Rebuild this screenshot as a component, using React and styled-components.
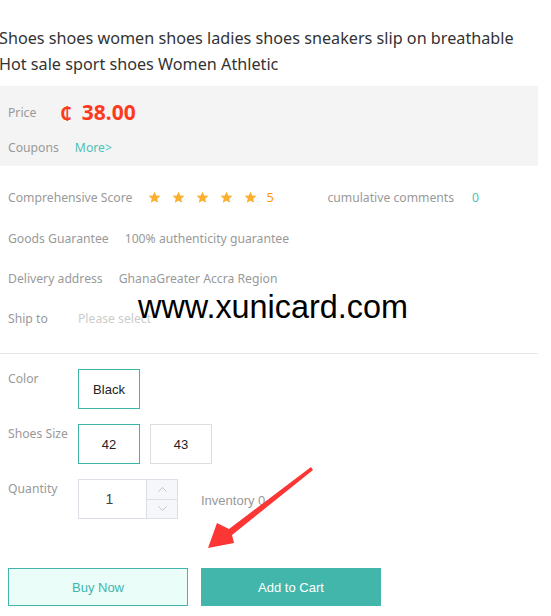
import React from 'react';
import styled, { createGlobalStyle } from 'styled-components';

const GlobalStyle = createGlobalStyle`
    body{
        margin:0;
        background:#fff;
        font-family:"Noto Sans", "Open Sans", sans-serif;
    }
`;

const Page = styled.div`
    position:relative;
    width:538px;
    padding-top:25px;
`;

const Title = styled.h1`
    margin:0 0 9px -1px;
    font-size:16.2px;
    font-weight:400;
    line-height:26px;
    color:#333;
`;

const PricePanel = styled.div`
    background:#f4f4f4;
    padding:8px 8px 4px;
`;

const Row = styled.div`
    display:flex;
    align-items:center;
    height:${props => props.h || 40}px;
    margin-top:${props => props.mt || 0}px;
    font-size:12.2px;
    color:#999;
`;

const Label = styled.span`
    flex:none;
    width:${props => props.w ? props.w + 'px' : 'auto'};
    margin-right:${props => props.w ? 0 : props.mr || 16}px;
    color:#999;
`;

const Price = styled.span`
    margin-left:8px;
    font-size:21px;
    font-weight:700;
    color:#fd3a1d;
    small{
        font-size:18px;
        margin-right:10px;
    }
`;

const TealLink = styled.span`
    color:#4fc1b7;
    margin-left:${props => props.ml || 0}px;
`;

const Info = styled.div`
    padding:10px 8px 15px;
    border-bottom:1px solid #e8e8e8;
`;

const Stars = styled.span`
    display:flex;
    align-items:center;
    gap:11px;
    svg{
        width:13px;
        height:13px;
        fill:#fbb12f;
    }
`;

const Score = styled.span`
    color:#f90;
    font-size:13px;
    margin-left:9px;
    width:61px;
`;

const Muted = styled.span`
    color:${props => props.light ? '#ccc' : '#999'};
`;

const Options = styled.div`
    padding:15px 8px 0;
    display:flex;
    flex-direction:column;
    gap:15px;
`;

const OptRow = styled.div`
    display:flex;
    align-items:flex-start;
    font-size:12.2px;
`;

const OptLabel = styled.span`
    width:70px;
    flex:none;
    color:#999;
    line-height:20px;
`;

const Choices = styled.div`
    display:flex;
    gap:10px;
    align-items:center;
`;

const Choice = styled.div`
    width:62px;
    height:40px;
    box-sizing:border-box;
    border:1px solid ${props => props.active ? '#3cb4a6' : '#ddd'};
    display:flex;
    align-items:center;
    justify-content:center;
    font-family:"Liberation Sans", Arial, sans-serif;
    font-size:13px;
    color:#222;
    background:#fff;
`;

const Stepper = styled.div`
    display:flex;
    width:100px;
    height:40px;
    box-sizing:border-box;
    border:1px solid #dcdfe6;
`;

const StepValue = styled.div`
    flex:1;
    display:flex;
    align-items:center;
    justify-content:center;
    padding-right:6px;
    font-family:"Liberation Sans", Arial, sans-serif;
    font-size:14px;
    color:#444;
`;

const StepButtons = styled.div`
    width:30px;
    border-left:1px solid #dcdfe6;
    background:#f5f7fa;
    display:flex;
    flex-direction:column;
`;

const StepBtn = styled.div`
    flex:1;
    display:flex;
    align-items:center;
    justify-content:center;
    & + &{
        border-top:1px solid #dcdfe6;
    }
    svg{
        width:9px;
        height:5px;
        stroke:#c0c4cc;
        fill:none;
        stroke-width:1;
    }
`;

const Inventory = styled.span`
    margin:14px 0 0 23px;
    font-family:"Liberation Sans", Arial, sans-serif;
    font-size:13px;
    color:#999;
`;

const Actions = styled.div`
    display:flex;
    gap:13px;
    padding:49px 8px 10px;
`;

const Button = styled.button`
    width:180px;
    height:38px;
    box-sizing:border-box;
    border:1px solid #42b6ab;
    background:${props => props.primary ? '#42b6ab' : '#eafdf8'};
    color:${props => props.primary ? '#fff' : '#42b6ab'};
    font-family:"Liberation Sans", Arial, sans-serif;
    font-size:13px;
    cursor:pointer;
`;

const Watermark = styled.div`
    position:absolute;
    left:138px;
    top:289px;
    font-family:"Liberation Sans", Arial, sans-serif;
    font-size:32.4px;
    color:#000;
    line-height:37px;
    pointer-events:none;
`;

const Arrow = styled.svg`
    position:absolute;
    left:0;
    top:0;
    width:538px;
    height:616px;
    pointer-events:none;
`;

const Star = () => (
    <svg viewBox="0 0 24 24"><path d="M12 1l3.2 7.2 7.8.7-5.9 5.2 1.8 7.7L12 17.8l-6.9 4 1.8-7.7L1 8.9l7.8-.7z"/></svg>
);

export default function App(){
    return(
        <Page>
            <GlobalStyle/>
            <Title>Shoes shoes women shoes ladies shoes sneakers slip on breathable Hot sale sport shoes Women Athletic</Title>
            <PricePanel>
                <Row h={36}>
                    <Label>Price</Label>
                    <Price><small>₵</small>38.00</Price>
                </Row>
                <Row h={30} mt={2}>
                    <Label>Coupons</Label>
                    <TealLink>More&gt;</TealLink>
                </Row>
            </PricePanel>
            <Info>
                <Row h={42}>
                    <Label>Comprehensive Score</Label>
                    <Stars><Star/><Star/><Star/><Star/><Star/></Stars>
                    <Score>5</Score>
                    <Label mr={18}>cumulative comments</Label>
                    <TealLink>0</TealLink>
                </Row>
                <Row>
                    <Label>Goods Guarantee</Label>
                    <Muted>100% authenticity guarantee</Muted>
                </Row>
                <Row>
                    <Label>Delivery address</Label>
                    <Muted>GhanaGreater Accra Region</Muted>
                </Row>
                <Row>
                    <Label w={70}>Ship to</Label>
                    <Muted light>Please select</Muted>
                </Row>
            </Info>
            <Options>
                <OptRow>
                    <OptLabel>Color</OptLabel>
                    <Choices><Choice active>Black</Choice></Choices>
                </OptRow>
                <OptRow>
                    <OptLabel>Shoes Size</OptLabel>
                    <Choices><Choice active>42</Choice><Choice>43</Choice></Choices>
                </OptRow>
                <OptRow>
                    <OptLabel>Quantity</OptLabel>
                    <Stepper>
                        <StepValue>1</StepValue>
                        <StepButtons>
                            <StepBtn><svg viewBox="0 0 9 5"><path d="M.5 4.5L4.5.5l4 4"/></svg></StepBtn>
                            <StepBtn><svg viewBox="0 0 9 5"><path d="M.5.5l4 4 4-4"/></svg></StepBtn>
                        </StepButtons>
                    </Stepper>
                    <Inventory>Inventory 0</Inventory>
                </OptRow>
            </Options>
            <Actions>
                <Button>Buy Now</Button>
                <Button primary>Add to Cart</Button>
            </Actions>
            <Watermark>www.xunicard.com</Watermark>
            <Arrow viewBox="0 0 538 616">
                <polygon fill="#fc3535" points="311,467 229,529 217,523 208,548 234,543 232,535 313,470"/>
            </Arrow>
        </Page>
    );
}
